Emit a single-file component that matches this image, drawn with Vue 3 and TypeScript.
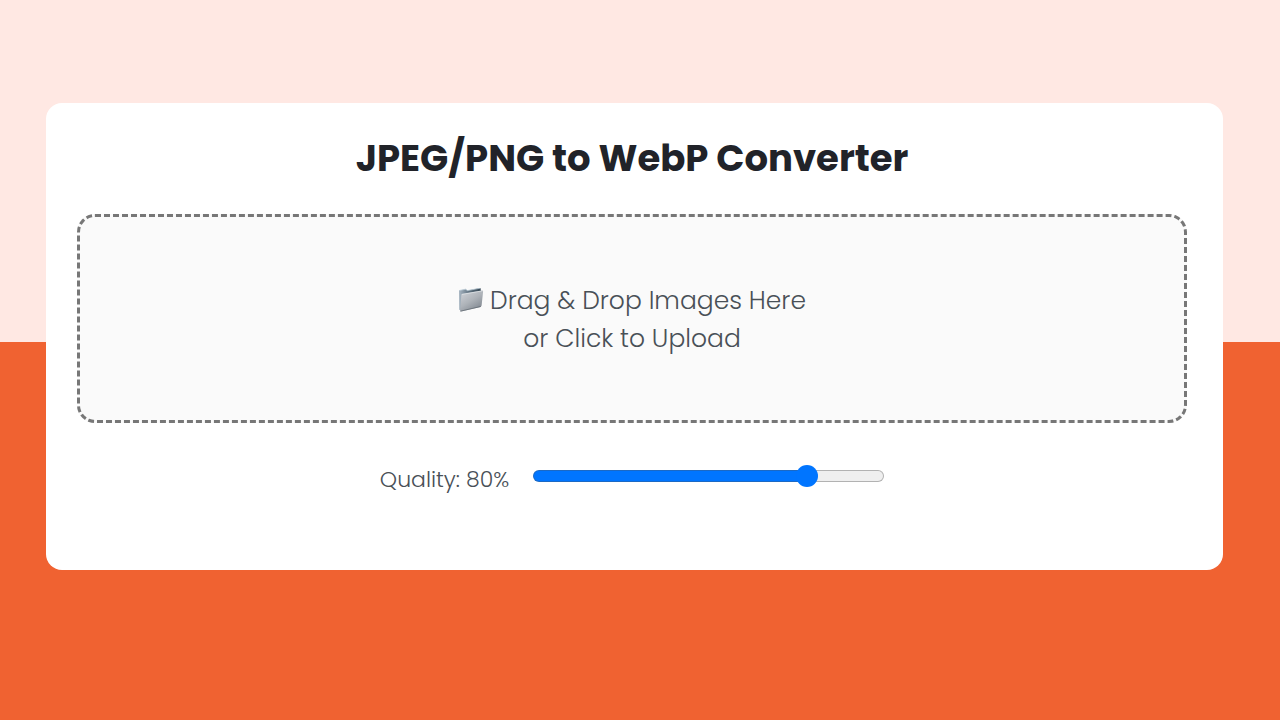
<script setup lang="ts">
import { computed, ref } from 'vue'

const quality = ref(80)
const files = ref<File[]>([])

// The filled part ends at the centre of the 22px thumb.
const trackStyle = computed(() => ({
  '--fill': `calc(11px + (100% - 22px) * ${quality.value / 100})`,
}))

function onPick(event: Event): void {
  files.value = Array.from((event.target as HTMLInputElement).files ?? [])
}

function onDrop(event: DragEvent): void {
  files.value = Array.from(event.dataTransfer?.files ?? [])
}
</script>

<template>
  <main class="page">
    <section class="card">
      <h1 class="title">JPEG/PNG to WebP Converter</h1>

      <label class="dropzone" for="images" @dragover.prevent @drop.prevent="onDrop">
        <input
          id="images"
          class="file-input"
          type="file"
          accept="image/jpeg,image/png"
          multiple
          @change="onPick"
        />
        <span class="line">
          <svg class="folder" viewBox="0 0 26 26" aria-hidden="true">
            <defs>
              <linearGradient id="folder-front" x1="0.1" y1="0" x2="0.8" y2="1">
                <stop offset="0" stop-color="#d0d3d8" />
                <stop offset="0.5" stop-color="#aeb3b9" />
                <stop offset="1" stop-color="#7c838c" />
              </linearGradient>
              <linearGradient id="folder-back" x1="0" y1="0" x2="1" y2="0">
                <stop offset="0" stop-color="#a9b7c3" />
                <stop offset="0.45" stop-color="#627482" />
                <stop offset="1" stop-color="#344653" />
              </linearGradient>
            </defs>
            <path d="M1 2.6 7.6 1.2 9.4 2.6 22.4 0 23 3 21.6 18 3 22.6 1.2 21.8Z" fill="url(#folder-back)" />
            <path d="M1 2.6 7.6 1.2 9.4 2.6 22.2 0.2" fill="none" stroke="#b8c8d3" stroke-width="0.8" />
            <path d="M4.2 6 24 2.5Q25.2 2.3 25.1 3.4L23.6 17.6Q23.4 18.6 22.4 18.9L3 23.4Q2 23.6 2.1 22.6L3.3 7.1Q3.4 6.2 4.2 6Z" fill="url(#folder-front)" />
            <path d="M3.8 6.4 24.6 2.8" fill="none" stroke="#e4e8eb" stroke-width="0.7" />
            <path d="M2.4 23.2 22.8 18.5" fill="none" stroke="#5c646d" stroke-width="0.7" />
          </svg>
          Drag &amp; Drop Images Here
        </span>
        <span class="line">or Click to Upload</span>
      </label>

      <div class="quality">
        <label class="quality-label" for="quality">Quality: {{ quality }}%</label>
        <input
          id="quality"
          v-model.number="quality"
          class="slider"
          type="range"
          min="0"
          max="100"
          :style="trackStyle"
        />
      </div>
    </section>
  </main>
</template>

<style>
body {
  margin: 0;
}
</style>

<style scoped>
.page {
  box-sizing: border-box;
  min-height: 100vh;
  padding: 103px 57px 48px 46px;
  background: linear-gradient(#ffe8e3 47.5%, #f06231 47.5%);
  font-family: Poppins, Inter, 'Open Sans', sans-serif;
}

.card {
  padding: 32px 36px 65px 31px;
  border-radius: 16px;
  background: #fff;
}

.title {
  margin: 0 0 33px;
  color: #212329;
  font-size: 37px;
  font-weight: 700;
  line-height: 46px;
  text-align: center;
}

.dropzone {
  position: relative;
  display: flex;
  flex-direction: column;
  align-items: center;
  padding: 65px 16px 62px;
  border: 3px dashed #777;
  border-radius: 18px;
  background: #fafafa;
  color: #495057;
  font-size: 25px;
  font-weight: 300;
  line-height: 38px;
  cursor: pointer;
}

.file-input {
  position: absolute;
  width: 1px;
  height: 1px;
  overflow: hidden;
  opacity: 0;
}

.line {
  display: flex;
  align-items: center;
  gap: 6px;
}

.folder {
  width: 26px;
  height: 26px;
}

.quality {
  display: flex;
  align-items: center;
  justify-content: center;
  gap: 24px;
  margin-top: 32px;
}

.quality-label {
  color: #495057;
  font-size: 22px;
  font-weight: 300;
  line-height: 50px;
}

.slider {
  appearance: none;
  width: 351px;
  height: 22px;
  margin: 0 0 8px;
  background: transparent;
  cursor: pointer;
}

.slider::-webkit-slider-runnable-track {
  box-sizing: border-box;
  height: 12px;
  border: 1px solid transparent;
  border-radius: 6px;
  background:
    linear-gradient(90deg, #0075ff var(--fill), #efefef var(--fill)) padding-box,
    linear-gradient(90deg, #1c69c4 var(--fill), #b2b2b2 var(--fill)) border-box;
}

.slider::-webkit-slider-thumb {
  appearance: none;
  width: 22px;
  height: 22px;
  margin-top: -6px;
  border: 0;
  border-radius: 50%;
  background: #0075ff;
}
</style>
